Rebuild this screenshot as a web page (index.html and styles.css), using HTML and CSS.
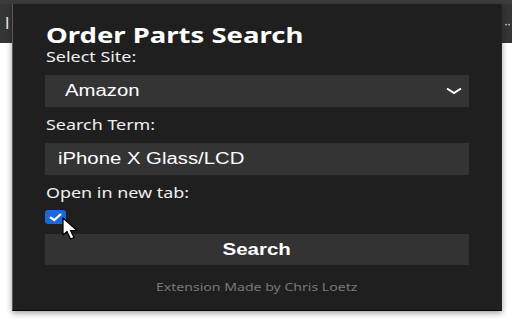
FILE: index.html
```html
<!DOCTYPE html>
<html>
<head>
<meta charset="utf-8">
<link rel="stylesheet" href="styles.css">
</head>
<body>
<div class="browser">
  <div class="topstrip"></div>
  <div class="toolbar">
    <span class="tb-left">I</span>
    <span class="tb-right">··</span>
  </div>
  <div class="page"></div>
</div>
<div class="popup">
  <h1 class="title">Order Parts Search</h1>
  <label class="label label-first">Select Site:</label>
  <div class="select">
    <span class="wide">Amazon</span>
    <svg class="chev" width="16" height="8" viewBox="0 0 16 8"><path d="M1 1.5 L8 6 L15 1.5" fill="none" stroke="#fff" stroke-width="2"/></svg>
  </div>
  <label class="label">Search Term:</label>
  <div class="input"><span class="wide">iPhone X Glass/LCD</span></div>
  <label class="label">Open in new tab:</label>
  <div class="checkrow">
    <span class="checkbox">
      <svg width="21" height="14" viewBox="0 0 21 14"><path d="M5 7.2 L9.3 10 L16 4" fill="none" stroke="#fff" stroke-width="2.2"/></svg>
    </span>
    <svg class="cursor" width="18" height="24" viewBox="0 0 18 24"><path d="M1 1 L1 18 L5 14.5 L8.5 22 L12 20.5 L8.5 13.5 L15 13.5 Z" fill="#fff" stroke="#000" stroke-width="1.2" stroke-linejoin="round"/></svg>
  </div>
  <div class="button"><span class="wide-c">Search</span></div>
  <div class="footer">Extension Made by Chris Loetz</div>
</div>
</body>
</html>
```
FILE: styles.css
```css
html, body {
  margin: 0;
  padding: 0;
  width: 512px;
  height: 320px;
  overflow: hidden;
  background: #fff;
  font-family: "Noto Sans", "DejaVu Sans", sans-serif;
}
.browser {
  display: flex;
  flex-direction: column;
  height: 320px;
}
.topstrip {
  height: 4px;
  background: #3d3d3d;
}
.toolbar {
  height: 39px;
  background: #353535;
  display: flex;
  align-items: center;
  justify-content: space-between;
  padding: 0 2px 0 5px;
  color: #e8e8e8;
  font-family: "Liberation Sans", Arial, sans-serif;
  font-size: 16px;
}
.tb-right {
  font-size: 12px;
  letter-spacing: -1px;
}
.page {
  flex: 1;
  background: #fff;
}
.popup {
  position: absolute;
  left: 12px;
  top: 4px;
  box-sizing: border-box;
  width: 490px;
  height: 307px;
  padding: 18px 32px 0 32px;
  background: #1f1f1f;
  border-left: 1px solid #5a5a5a;
  border-right: 1px solid #1a2a2a;
  border-bottom: 1px solid #050505;
  box-shadow: 0 2px 6px rgba(0,0,0,0.4);
  display: flex;
  flex-direction: column;
  color: #fff;
  overflow: hidden;
}
.title {
  align-self: flex-start;
  margin: 0 0 0 1px;
  font-size: 22px;
  font-weight: bold;
  line-height: 24px;
  transform: scaleX(1.25);
  transform-origin: left center;
  white-space: nowrap;
}
.label {
  align-self: flex-start;
  display: block;
  margin-top: 10px;
  margin-left: 1px;
  font-size: 14px;
  line-height: 16px;
  color: #f0f0f0;
  transform: scaleX(1.28);
  transform-origin: left center;
  white-space: nowrap;
}
.label-first {
  margin-top: 3px;
}
.select, .input {
  height: 32px;
  margin-top: 10px;
  background: #343434;
  display: flex;
  align-items: center;
  font-family: "Liberation Sans", Arial, sans-serif;
  font-size: 16px;
  color: #fff;
}
.select {
  padding: 0 7px 0 20px;
  justify-content: space-between;
}
.input {
  padding: 0 13px;
}
.wide {
  display: inline-block;
  transform: scaleX(1.27);
  transform-origin: left center;
}
.wide-c {
  display: inline-block;
  transform: scaleX(1.28);
  transform-origin: center;
}
.checkrow {
  position: relative;
  height: 14px;
  margin-top: 9px;
}
.checkbox {
  position: absolute;
  left: 0;
  top: 0;
  width: 21px;
  height: 14px;
  border-radius: 3px;
  background: #1a6ad6;
  display: flex;
}
.cursor {
  position: absolute;
  left: 17px;
  top: 7px;
}
.button {
  margin-top: 10px;
  height: 31px;
  background: #333333;
  display: flex;
  align-items: center;
  justify-content: center;
  font-family: "Liberation Sans", Arial, sans-serif;
  font-weight: bold;
  font-size: 16px;
}
.footer {
  align-self: center;
  margin-top: 15px;
  font-size: 11px;
  line-height: 13px;
  color: #787878;
  transform: scaleX(1.28);
  transform-origin: center;
  white-space: nowrap;
}
```
